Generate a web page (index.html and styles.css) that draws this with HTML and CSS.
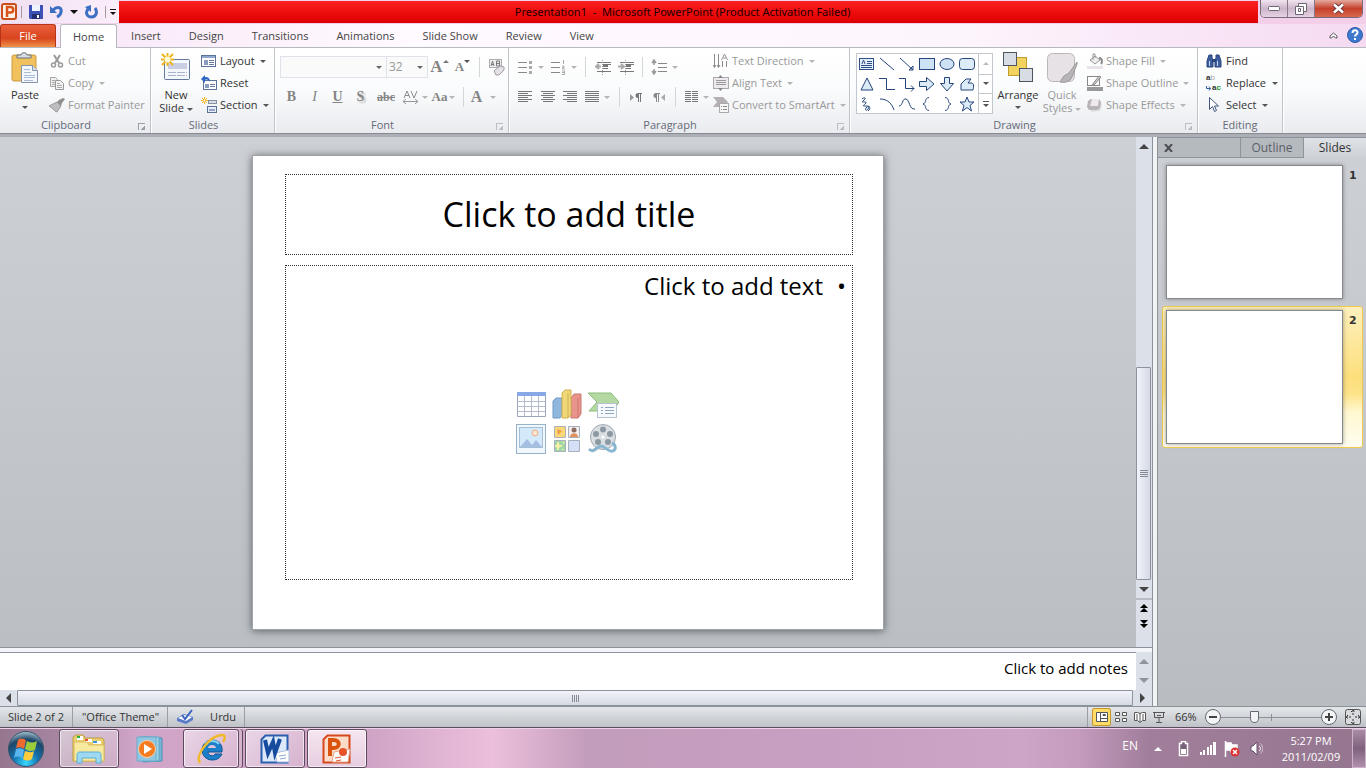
FILE: index.html
```html
<!DOCTYPE html>
<html lang="en">
<head>
    <meta charset="UTF-8">
    <meta name="viewport" content="width=device-width, initial-scale=1.0">
    <title>Presentation1 - Microsoft PowerPoint</title>
    <link rel="stylesheet" href="styles.css">
</head>
<body>
    <!-- title bar -->
    <header class="titlebar">
        <div class="quick-access">
            <svg class="logo" width="16" height="17" viewBox="0 0 16 17"><rect x="1" y="1" width="14" height="15" rx="2" fill="#fff3ea" stroke="#c9501d" stroke-width="2"/><path d="M6 14V4h3.500a2.500 2.500 0 0 1 0 5.500H6" fill="none" stroke="#d9541a" stroke-width="2.500"/></svg>
            <span class="qa-line"></span>
            <button aria-label="Save"><svg width="14" height="14" viewBox="0 0 14 14"><path d="M0 0h14v14H1l-1-1z" fill="#3d50b5"/><path d="M3 0h8v6H3z" fill="#eef3fc"/><path d="M3 9h8v5H3z" fill="#22306f"/><path d="M8 10h2v3H8z" fill="#fff"/></svg></button>
            <button aria-label="Undo" class="undo"><svg width="13" height="14" viewBox="0 0 13 14"><path d="M3 5c4-4 9-3 8 2-.5 3-2 4-4 5" fill="none" stroke="#3b6fc4" stroke-width="3"/><path d="M0 1v7h7z" fill="#3b6fc4"/></svg><span class="caret dark"></span></button>
            <button aria-label="Redo"><svg width="13" height="14" viewBox="0 0 13 14"><path d="M3 4c-3 4-1 8 3.500 8S13 7 10 3" fill="none" stroke="#3b6fc4" stroke-width="3"/><path d="M6 0v7L0 2z" fill="#3b6fc4"/></svg></button>
            <span class="qa-line"></span>
            <button aria-label="Customize toolbar" class="qa-more"><span class="caret dark"></span></button>
        </div>
        <div class="title">Presentation1&nbsp; -&nbsp; Microsoft PowerPoint (Product Activation Failed)</div>
        <div class="win-buttons">
            <button aria-label="Minimize"><svg width="12" height="5" viewBox="0 0 12 5"><rect x=".5" y=".5" width="11" height="4" rx="1" fill="#fff" stroke="#6d6474"/></svg></button>
            <button aria-label="Restore"><svg width="12" height="12" viewBox="0 0 12 12"><g fill="#fff" stroke="#6d6474"><path d="M3.500.5h8v8h-8z"/><path d="M.5 3.500h8v8h-8z"/><path d="M3.500 5.500h2v3h-2z"/></g></svg></button>
            <button aria-label="Close" class="win-close"><svg width="13" height="11" viewBox="0 0 13 11"><path d="M2 1.500l9 8M11 1.500l-9 8" stroke="#6b3a3a" stroke-width="4.500"/><path d="M2 1.500l9 8M11 1.500l-9 8" stroke="#fff" stroke-width="2.500"/></svg></button>
        </div>
    </header>

    <!-- ribbon tabs -->
    <nav class="tabs">
        <button class="file-tab">File</button>
        <button class="tab active">Home</button>
        <button class="tab">Insert</button>
        <button class="tab">Design</button>
        <button class="tab">Transitions</button>
        <button class="tab">Animations</button>
        <button class="tab">Slide Show</button>
        <button class="tab">Review</button>
        <button class="tab">View</button>
        <div class="tabs-right">
            <button aria-label="Minimize ribbon"><svg width="9" height="7" viewBox="0 0 9 7"><path d="M1 6V4l3.500-3L8 4v2H6.500l-2-2-2 2z" fill="#fff" stroke="#555"/></svg></button>
            <button aria-label="Help"><svg width="16" height="16" viewBox="0 0 16 16"><circle cx="8" cy="8" r="7.500" fill="#3f79cf" stroke="#2c5ba8"/><path d="M5.500 6c0-3.500 5-3.500 5-.5 0 2-2.500 2-2.500 4" fill="none" stroke="#fff" stroke-width="2"/><path d="M7 11h2v2H7z" fill="#fff"/></svg></button>
        </div>
    </nav>

    <!-- ribbon -->
    <div class="ribbon">
        <section class="group g-clipboard">
            <div class="group-body">
                <button class="big">
                    <svg width="30" height="32" viewBox="0 0 30 32"><rect x="2" y="3" width="24" height="26" rx="2" fill="#f1c15e" stroke="#c99a3e"/><path d="M7 6V3h4c0-3 6-3 6 0h4v3z" fill="#d9dde3" stroke="#6b7078"/><path d="M11.500 13.500h11l5 5v12h-16z" fill="#f4f8fd" stroke="#8593ab"/><path d="M22.500 13.500v5h5" fill="#d5e0ef" stroke="#8593ab"/><path d="M14 17.500h6M14 20.500h7M14 23.500h11M14 25.500h11M14 28.500h9" stroke="#a9bbd8"/></svg>
                    <span>Paste</span>
                    <span class="caret"></span>
                </button>
                <div class="stack">
                    <button class="small off"><svg width="16" height="16" viewBox="0 0 16 16"><path d="M5 2l5 8M11 2L6 10" stroke="#9a9a9a" stroke-width="2"/><circle cx="4.500" cy="12" r="2" fill="none" stroke="#9a9a9a" stroke-width="1.500"/><circle cx="11.500" cy="12" r="2" fill="none" stroke="#9a9a9a" stroke-width="1.500"/></svg>Cut</button>
                    <button class="small off"><svg width="16" height="16" viewBox="0 0 16 16"><path d="M1.500 2.500h5l2 2v7h-7z" fill="#efefef" stroke="#a5a5a5"/><path d="M6.500 5.500h5l3 3v6h-8z" fill="#f3f3f3" stroke="#9a9a9a"/><path d="M3 5.500h3M3 7.500h3M3 9.500h3M8 8.500h3M8 10.500h5M8 12.500h5" stroke="#aaa"/></svg>Copy<span class="caret"></span></button>
                    <button class="small off"><svg width="16" height="16" viewBox="0 0 16 16"><path d="M0 9l8-4 4 4-4 6-2-1-2-2z" fill="#bdbdbd" stroke="#9c9c9c"/><path d="M8 5l2-2 4-2 2 1-3 4-1 3z" fill="#8f8f8f"/></svg>Format Painter</button>
                </div>
            </div>
            <div class="group-label">Clipboard<span class="launcher"></span></div>
        </section>

        <section class="group g-slides">
            <div class="group-body">
                <button class="big">
                    <svg width="30" height="32" viewBox="0 0 30 32"><rect x="3.500" y="7.500" width="25" height="20" rx="1" fill="#f4f8fc" stroke="#64799b"/><path d="M7 11h19v6H7z" fill="#c9cee2"/><path d="M7 20.500h19M7 23.500h19" stroke="#a9b4c9" stroke-dasharray="8 1"/><path d="M6.500 1v13M0 7.500h13M1 2l11 11M12 2L1 13" stroke="#eeb51c" stroke-width="2"/><circle cx="6.500" cy="7.500" r="3" fill="#fffbd5"/></svg>
                    <span>New</span>
                    <span>Slide <span class="caret"></span></span>
                </button>
                <div class="stack">
                    <button class="small"><svg width="16" height="16" viewBox="0 0 16 16"><rect x=".5" y="2.500" width="14" height="11" fill="#fff" stroke="#5b7299"/><path d="M1 3h13v2H1z" fill="#8fa8cf"/><path d="M3 7h4v5H3z" fill="#8b9dbd"/><path d="M8 7.500h5M8 9.500h5M8 11.500h5" stroke="#65779a"/></svg>Layout<span class="caret"></span></button>
                    <button class="small"><svg width="16" height="16" viewBox="0 0 16 16"><rect x="2.500" y="5.500" width="13" height="9" fill="#fff" stroke="#5b7299"/><path d="M4 9h4v4H4z" fill="#8b9dbd"/><path d="M9 9.500h5M9 11.500h5" stroke="#65779a"/><path d="M0 4l4-4v2c3 0 5 1 5 5-1-2-3-3-5-2v3z" fill="#2f68c4"/></svg>Reset</button>
                    <button class="small"><svg width="16" height="16" viewBox="0 0 16 16"><rect x="7.500" y="3.500" width="8" height="3" fill="#d9dde5" stroke="#8790a2"/><rect x="6.500" y="9.500" width="9" height="6" fill="#e7eef9" stroke="#5b7299"/><path d="M8 12h6v2H8z" fill="#93a5c4"/><path d="M3.500 0v7M0 3.500h7M1 1l5 5M6 1L1 6" stroke="#eeb51c"/><circle cx="3.500" cy="3.500" r="1" fill="#fff"/></svg>Section<span class="caret"></span></button>
                </div>
            </div>
            <div class="group-label">Slides</div>
        </section>

        <section class="group g-font">
            <div class="group-body rows">
                <div class="row">
                    <span class="combo font-name"><select aria-label="Font"><option></option></select></span>
                    <span class="combo font-size"><select aria-label="Font size"><option>32</option></select></span>
                    <button class="ico" aria-label="Grow font"><span class="serif grow">A</span><span class="tri up"></span></button>
                    <button class="ico" aria-label="Shrink font"><span class="serif shrink">A</span><span class="tri down"></span></button>
                    <span class="sep"></span>
                    <button class="ico" aria-label="Clear formatting"><svg width="18" height="18" viewBox="0 0 18 18"><rect x="1.500" y="1.500" width="12" height="8" fill="#eee" stroke="#b3abb3"/><path d="M3 8l1.500-5L6 8M3.500 6.500h2M8.500 3v5h3V3h-3M9 5.500h2" fill="none" stroke="#777"/><path d="M6 13l6-5 4 1v3l-5 5H8z" fill="#e4e0e6" stroke="#a39ba5"/></svg></button>
                </div>
                <div class="row">
                    <button class="ico serif bold">B</button>
                    <button class="ico serif italic">I</button>
                    <button class="ico serif under">U</button>
                    <button class="ico serif shadow">S</button>
                    <button class="ico wide serif strike">abc</button>
                    <button class="ico drop" aria-label="Character spacing"><svg width="18" height="16" viewBox="0 0 18 16"><path d="M2 9l3-7 3 7M3 6.500h4M9 2l3 7 3-7" fill="none" stroke="#8c8c8c"/><path d="M1 12.500h15M4 10l-3 2.500L4 15M13 10l3 2.500-3 2.500" fill="none" stroke="#999"/></svg><span class="caret pale"></span></button>
                    <button class="ico drop serif case">Aa<span class="caret pale"></span></button>
                    <span class="sep"></span>
                    <button class="ico drop serif color">A<span class="caret pale"></span></button>
                </div>
            </div>
            <div class="group-label">Font<span class="launcher pale"></span></div>
        </section>

        <section class="group g-paragraph">
            <div class="group-body">
                <div class="rows para-rows">
                    <div class="row">
                        <button class="ico drop2" aria-label="Bullets"><svg width="15" height="15" viewBox="0 0 15 15"><path d="M0 2.500h9M0 7.500h9M0 12.500h9" stroke="#888"/><path d="M11 1h3v3h-3zM11 6h3v3h-3zM11 11h3v3h-3z" fill="#aaa"/></svg><span class="caret pale"></span></button>
                        <button class="ico drop2" aria-label="Numbering"><svg width="15" height="15" viewBox="0 0 15 15"><path d="M0 2.500h9M0 7.500h9M0 12.500h9" stroke="#888"/><path d="M12.500 0v4M11 6h2v1.500h-1.500V9H14M11 11h2.500v3.500H11M11 12.500h2" fill="none" stroke="#aaa"/></svg><span class="caret pale"></span></button>
                        <span class="sep"></span>
                        <button class="ico" aria-label="Decrease indent"><svg width="16" height="15" viewBox="0 0 16 15"><path d="M2 2.500h14M7 8.500h6M2 11.500h14" stroke="#777"/><path d="M8 4h8v1H8zM8 5h5v2H8z" fill="#777"/><path d="M6 6.500H1M4 4L1 6.500 4 9" fill="none" stroke="#aaa" stroke-width="2"/><path d="M7.500 0v15" stroke="#999" stroke-dasharray="1 1"/></svg></button>
                        <button class="ico" aria-label="Increase indent"><svg width="16" height="15" viewBox="0 0 16 15"><path d="M2 2.500h14M7 8.500h6M2 11.500h14" stroke="#777"/><path d="M8 4h8v1H8zM8 5h5v2H8z" fill="#777"/><path d="M0 6.500h5M3 4l3 2.500L3 9" fill="none" stroke="#aaa" stroke-width="2"/><path d="M7.500 0v15" stroke="#999" stroke-dasharray="1 1"/></svg></button>
                        <span class="sep"></span>
                        <button class="ico drop2" aria-label="Line spacing"><svg width="16" height="16" viewBox="0 0 16 16"><path d="M7 4.500h9M7 8.500h9M7 12.500h9" stroke="#888"/><path d="M3 1v5M3 10v5M1 4l2-3 2 3M1 12l2 3 2-3" fill="none" stroke="#999" stroke-width="1.500"/></svg><span class="caret pale"></span></button>
                    </div>
                    <div class="row">
                        <button class="ico" aria-label="Align left"><svg width="14" height="12" viewBox="0 0 14 12"><path d="M0 .5h14M0 2.500h10M0 4.500h14M0 6.500h10M0 8.500h14M0 10.500h10" stroke="#777"/></svg></button>
                        <button class="ico" aria-label="Center"><svg width="14" height="12" viewBox="0 0 14 12"><path d="M0 .5h14M2 2.500h10M0 4.500h14M2 6.500h10M0 8.500h14M2 10.500h10" stroke="#777"/></svg></button>
                        <button class="ico" aria-label="Align right"><svg width="14" height="12" viewBox="0 0 14 12"><path d="M0 .5h14M4 2.500h10M0 4.500h14M4 6.500h10M0 8.500h14M4 10.500h10" stroke="#777"/></svg></button>
                        <button class="ico drop2" aria-label="Justify"><svg width="14" height="12" viewBox="0 0 14 12"><path d="M0 .5h14M0 2.500h14M0 4.500h14M0 6.500h14M0 8.500h14M0 10.500h14" stroke="#777"/></svg><span class="caret pale"></span></button>
                        <span class="sep"></span>
                        <button class="ico" aria-label="Left to right"><svg width="12" height="9" viewBox="0 0 12 9"><path d="M0 1l4 3.500L0 8z" fill="#999"/><path d="M12 0H8a2 2 0 0 0 0 5v4h1V1h1v8h1V1h1z" fill="#777"/></svg></button>
                        <button class="ico" aria-label="Right to left"><svg width="12" height="9" viewBox="0 0 12 9"><path d="M12 1L8 4.500 12 8z" fill="#aaa"/><path d="M7 0H3a2 2 0 0 0 0 5v4h1V1h1v8h1V1h1z" fill="#888"/></svg></button>
                        <span class="sep"></span>
                        <button class="ico drop2" aria-label="Columns"><svg width="13" height="12" viewBox="0 0 13 12"><path d="M0 .5h6M0 2.500h6M0 4.500h6M0 6.500h6M0 8.500h6M0 10.500h6M7 .5h6M7 2.500h6M7 4.500h6M7 6.500h6M7 8.500h6M7 10.500h6" stroke="#777"/></svg><span class="caret pale"></span></button>
                    </div>
                </div>
                <div class="stack">
                    <button class="small off"><svg width="16" height="16" viewBox="0 0 16 16"><path d="M1.500 1v13M5.500 1v13M9.500 8v6M13.500 8v6M0 12l1.500 2.500L3 12M4 12l1.500 2.500L7 12" fill="none" stroke="#8a8a8a"/><path d="M8.500 7l3-6 3 6M10 5h3" fill="none" stroke="#999"/></svg>Text Direction<span class="caret"></span></button>
                    <button class="small off"><svg width="16" height="16" viewBox="0 0 16 16"><rect x=".5" y="2.500" width="15" height="11" fill="#eee9ee" stroke="#aaa"/><path d="M3 5.500h10M3 7.500h10M3 9.500h10" stroke="#999"/><path d="M5 3l2.500-3L10 3zM5 13l2.500 3 2.500-3z" fill="#888"/></svg>Align Text<span class="caret"></span></button>
                    <button class="small off"><svg width="16" height="16" viewBox="0 0 16 16"><path d="M0 0h10l5 5-3 5H0l4-5z" fill="#b5b0b5"/><rect x="6.500" y="6.500" width="9" height="9" fill="#f6f6f6" stroke="#aaa"/><path d="M8 9.500h1M10 9.500h4M8 12.500h1M10 12.500h4" stroke="#888"/></svg>Convert to SmartArt<span class="caret"></span></button>
                </div>
            </div>
            <div class="group-label">Paragraph<span class="launcher pale"></span></div>
        </section>

        <section class="group g-drawing">
            <div class="group-body">
                <div class="gallery">
                    <div class="shapes">
                        <button aria-label="Text box"><svg viewBox="0 0 16 16"><rect x=".5" y="2.500" width="14" height="11" fill="#e4effa" stroke="#2c4f86"/><path d="M3 8l1.500-4L6 8M8 5.500h5M8 7.500h5M2 9.500h11M2 11.500h11" fill="none" stroke="#2c4f86"/></svg></button>
                        <button aria-label="Line"><svg viewBox="0 0 16 16"><path d="M1 2l14 12"/></svg></button>
                        <button aria-label="Arrow"><svg viewBox="0 0 16 16"><path d="M1 2l13 12M14 10v4h-4z"/></svg></button>
                        <button aria-label="Rectangle"><svg viewBox="0 0 16 16"><rect x=".5" y="2.500" width="15" height="11" fill="#cde2f5"/></svg></button>
                        <button aria-label="Oval"><svg viewBox="0 0 16 16"><ellipse cx="8" cy="8" rx="7" ry="5.500" fill="#cde2f5"/></svg></button>
                        <button aria-label="Rounded rectangle"><svg viewBox="0 0 16 16"><rect x=".5" y="2.500" width="15" height="11" rx="3" fill="#dcebf8"/></svg></button>
                        <button aria-label="Triangle"><svg viewBox="0 0 16 16"><path d="M8 2l6 12H2z" fill="#dcebf8"/></svg></button>
                        <button aria-label="Elbow"><svg viewBox="0 0 16 16"><path d="M0 2.500h7.500v11H16"/></svg></button>
                        <button aria-label="Elbow arrow"><svg viewBox="0 0 16 16"><path d="M0 2.500h6.500v10H15M12 9.500l3 3-3 3"/></svg></button>
                        <button aria-label="Right arrow"><svg viewBox="0 0 16 16"><path d="M.5 5.500h7V1.500L15 8l-7.500 6.500v-4h-7z" fill="#dcebf8"/></svg></button>
                        <button aria-label="Down arrow"><svg viewBox="0 0 16 16"><path d="M5.500 1.500h5v6h4L8 15 1.500 7.500h4z" fill="#dcebf8"/></svg></button>
                        <button aria-label="Freeform"><svg viewBox="0 0 16 16"><path d="M2 14V8l5-5h5l-3 4h3c3 0 3 3 2 7z" fill="#dcebf8"/></svg></button>
                        <button aria-label="Scribble"><svg viewBox="0 0 16 16"><path d="M3 3c4-3 4 0 1 2s4 0 3 2-5 3-1 3 5 0 3 3-4 0-1-2 4 2 1 4"/></svg></button>
                        <button aria-label="Arc"><svg viewBox="0 0 16 16"><path d="M1 3c8 0 12 5 14 11"/></svg></button>
                        <button aria-label="Curve"><svg viewBox="0 0 16 16"><path d="M0 10C4 10 3 2 7 3s3 11 9 10"/></svg></button>
                        <button aria-label="Left brace"><svg viewBox="0 0 16 16"><path d="M10 1.500C5 2 8 7 4 8c4 1 1 6 6 6.500"/></svg></button>
                        <button aria-label="Right brace"><svg viewBox="0 0 16 16"><path d="M6 1.500c5 .5 2 5.500 6 6.500-4 1-1 6-6 6.500"/></svg></button>
                        <button aria-label="Star"><svg viewBox="0 0 16 16"><path d="M8 1l2 5h5l-4 3.500L12.500 15 8 11.500 3.500 15 5 9.500 1 6h5z" fill="#dcebf8"/></svg></button>
                    </div>
                    <div class="gallery-scroll">
                        <button aria-label="Up"><span class="tri up pale"></span></button>
                        <button aria-label="Down"><span class="caret"></span></button>
                        <button aria-label="More" class="more"><span class="caret"></span></button>
                    </div>
                </div>
                <button class="big">
                    <svg width="32" height="32" viewBox="0 0 32 32"><rect x="6.500" y="5.500" width="18" height="18" fill="#f3d35f" stroke="#c29c2c"/><rect x="1.500" y=".5" width="13" height="13" fill="#d8dde3" stroke="#4d5561"/><rect x="17.500" y="16.500" width="13" height="13" fill="#d8dde3" stroke="#4d5561"/></svg>
                    <span>Arrange</span>
                    <span class="caret"></span>
                </button>
                <button class="big off">
                    <svg width="32" height="32" viewBox="0 0 32 32"><rect x="1.500" y="1.500" width="27" height="28" rx="5" fill="#e6e2e6" stroke="#bbb6bb"/><path d="M31 10l-8 11-5 3-4 6c5 1 10 0 12-5l5-13z" fill="#b8b4b8" stroke="#999"/></svg>
                    <span>Quick</span>
                    <span>Styles <span class="caret"></span></span>
                </button>
                <div class="stack">
                    <button class="small off"><svg width="16" height="16" viewBox="0 0 16 16"><path d="M3 7l5-4 5 4-5 4z" fill="#eee" stroke="#999"/><path d="M6 7V1h2v4" fill="none" stroke="#999"/><path d="M12 5c4 0 3 5 2 6" fill="none" stroke="#888" stroke-width="2"/><path d="M0 13h16v3H0z" fill="#e8e3e8"/></svg>Shape Fill<span class="caret"></span></button>
                    <button class="small off"><svg width="16" height="16" viewBox="0 0 16 16"><rect x=".5" y="1.500" width="12" height="9" fill="#fff" stroke="#888"/><path d="M5 10l7-9 2 1-7 8z" fill="#ccc" stroke="#888"/><path d="M0 12h16v4H0z" fill="#999"/></svg>Shape Outline<span class="caret"></span></button>
                    <button class="small off"><svg width="16" height="16" viewBox="0 0 16 16"><path d="M5 5l10 2-2 7-9 1z" fill="#ddd"/><path d="M4 2h8l2 3-1 6-3 2H2l-2-3 1-6z" fill="#b7b3b7"/><path d="M5 2h7l-1 7H3z" fill="#eee9ee"/></svg>Shape Effects<span class="caret"></span></button>
                </div>
            </div>
            <div class="group-label">Drawing<span class="launcher pale"></span></div>
        </section>

        <section class="group g-editing">
            <div class="group-body">
                <div class="stack">
                    <button class="small"><svg width="16" height="16" viewBox="0 0 16 16"><path d="M3 2h3v3l1 2v7H1V8zM10 2h3l2 6v6H9V7l1-2z" fill="#3c5e9e" stroke="#28457d"/><path d="M6 6h4v3H6z" fill="#28457d"/><path d="M3.500 8v5M11.500 8v5" stroke="#c8d8f0"/></svg>Find</button>
                    <button class="small"><span class="replace-icon"><span><b>a</b>b</span><span class="second"><svg width="5" height="5" viewBox="0 0 5 5"><path d="M.5 0v2.500h4M3 .5l1.500 2L3 4.500" fill="none" stroke="#2c5aa8"/></svg><b>a<em>c</em></b></span></span>Replace<span class="caret"></span></button>
                    <button class="small"><svg width="16" height="16" viewBox="0 0 16 16"><path d="M3.500.5v12l3-3 2 5 2-1-2-4.500h4z" fill="#fff" stroke="#3f5580"/></svg>Select<span class="caret"></span></button>
                </div>
            </div>
            <div class="group-label">Editing</div>
        </section>
    </div>

    <!-- work area -->
    <main class="workspace">
        <div class="editor">
            <div class="canvas-row">
                <div class="canvas">
                    <div class="slide">
                        <div class="placeholder title-box">Click to add title</div>
                        <div class="placeholder text-box">
                            <p>Click to add text<span>•</span></p>
                            <div class="inserts">
                                <button aria-label="Insert table"><svg viewBox="0 0 32 32"><path d="M2.500 4.500h28v24h-28z" fill="#fff" stroke="#98a5ba"/><path d="M2 4h29v4H2z" fill="#89a9e6"/><path d="M2 13.500h29M2 18.500h29M2 23.500h29M9.500 8v20M16.500 8v20M23.500 8v20" stroke="#b4bccb"/></svg></button>
                                <button aria-label="Insert chart"><svg viewBox="0 0 32 32"><path d="M2 13l3-3h6v17l-2 3H2z" fill="#8fb7dd" stroke="#6f9bc7"/><path d="M20 10l3-4h7v20l-3 4h-7z" fill="#e8948c" stroke="#cc7770"/><path d="M11 5l3-3h6v25l-3 3h-6z" fill="#f0d77a" stroke="#cfb04e"/><path d="M17 5v24" stroke="#cfb04e"/><path d="M27 10v19" stroke="#cc7770"/></svg></button>
                                <button aria-label="Insert SmartArt"><svg viewBox="0 0 32 32"><path d="M1 5h23l8 9-6 9H2l8-9z" fill="#b3d8a2" stroke="#8dbd7a"/><rect x="10.500" y="15.500" width="19" height="14" fill="#f7fafc" stroke="#b6c2cf"/><path d="M14 19.500h2M18 19.500h9M14 22.500h2M18 22.500h9M14 25.500h2M18 25.500h9" stroke="#8fa6bd"/></svg></button>
                                <button aria-label="Insert picture"><svg viewBox="0 0 32 32"><rect x="1.500" y="1.500" width="29" height="29" fill="#f1f8fd" stroke="#96b3cb"/><rect x="4.500" y="4.500" width="23" height="20" fill="#d4eafa" stroke="#a3bfd6"/><circle cx="20" cy="10" r="3" fill="#fde5cf" stroke="#f0ac8a"/><path d="M5 24l7-8 5 6 4-5 6 7z" fill="#a5bee2"/></svg></button>
                                <button aria-label="Insert clip art"><svg viewBox="0 0 32 32"><path d="M3.500 3.500h11v11h-11z" fill="#fbd875" stroke="#a8b0bd"/><path d="M17.500 3.500h11v11h-11z" fill="#f2eeee" stroke="#a8b0bd"/><path d="M3.500 17.500h11v11h-11z" fill="#9fd5a7" stroke="#a8b0bd"/><path d="M17.500 17.500h11v11h-11z" fill="#d5e0f8" stroke="#a8b0bd"/><path d="M6 6l5 2-4 4z" fill="#ed9d4e"/><circle cx="23" cy="7" r="2.500" fill="#8c6d64"/><path d="M19 14c0-5 8-5 8 0z" fill="#e2925e"/><path d="M7 19l1 3 3 1-3 1-1 3-1-3-2-1 2-1zM12 18l1 3M11 26l2 1" fill="#f7f3a5" stroke="#f7f3a5"/></svg></button>
                                <button aria-label="Insert media"><svg viewBox="0 0 32 32"><circle cx="16" cy="14" r="12.500" fill="#d9dee3" stroke="#9fa8b1"/><g fill="#8c98a2"><circle cx="16" cy="6.500" r="3"/><circle cx="9" cy="11" r="3"/><circle cx="23" cy="11" r="3"/><circle cx="11" cy="19" r="3"/><circle cx="21" cy="19" r="3"/></g><circle cx="16" cy="14" r="1.500" fill="#fff"/><path d="M2 26c5 5 8-3 12-3s8 7 12 5 2-7-1-8" fill="none" stroke="#88b5d0" stroke-width="3"/></svg></button>
                            </div>
                        </div>
                    </div>
                </div>
                <div class="vscroll">
                    <button aria-label="Scroll up"><span class="tri up"></span></button>
                    <div class="track"><div class="thumb"></div></div>
                    <button aria-label="Scroll down"><span class="tri down"></span></button>
                    <div class="page-buttons">
                        <button aria-label="Previous slide"><span class="tri up"></span><span class="tri up"></span></button>
                        <button aria-label="Next slide"><span class="tri down"></span><span class="tri down"></span></button>
                    </div>
                </div>
            </div>
            <div class="notes">
                <div class="notes-text">Click to add notes</div>
                <div class="notes-scroll">
                    <button aria-label="Notes up"><span class="tri up"></span></button>
                    <button aria-label="Notes down"><span class="tri down"></span></button>
                </div>
            </div>
            <div class="hscroll">
                <button aria-label="Scroll left"><span class="tri left"></span></button>
                <div class="thumb"></div>
                <button aria-label="Scroll right"><span class="tri right"></span></button>
            </div>
        </div>

        <aside class="pane">
            <div class="pane-tabs">
                <div class="pane-close"><button aria-label="Close pane"><svg width="9" height="8" viewBox="0 0 9 8"><path d="M1 0l7 8M8 0L1 8" stroke="#4b4f54" stroke-width="2"/></svg></button></div>
                <button class="pane-tab">Outline</button>
                <button class="pane-tab active">Slides</button>
            </div>
            <ol class="thumbs">
                <li><div class="mini"></div><span>1</span></li>
                <li class="selected"><div class="mini"></div><span>2</span></li>
            </ol>
        </aside>
    </main>

    <!-- status bar -->
    <footer class="status">
        <span class="cell">Slide 2 of 2</span>
        <span class="cell">"Office Theme"</span>
        <span class="cell lang"><svg width="17" height="16" viewBox="0 0 17 16"><path d="M0 9l7-4 9 3v3l-7 4-9-3z" fill="#5a7cc8"/><path d="M1 9l6-3 8 2-6 4z" fill="#fff"/><path d="M5 6l3 4 7-9" fill="none" stroke="#3a63c0" stroke-width="2"/></svg>Urdu</span>
        <div class="views">
            <button class="current" aria-label="Normal view"><svg width="12" height="10" viewBox="0 0 12 10"><path d="M.5.5h11v9H.5zM4.500.5v9M7 3.500h2.500v-1H7zM5 6.500h7" fill="#fff" stroke="#555"/></svg></button>
            <button aria-label="Slide sorter"><svg width="12" height="10" viewBox="0 0 12 10"><path d="M.5.5h4v3h-4zM7.500.5h4v3h-4zM.5 6.500h4v3h-4zM7.500 6.500h4v3h-4z" fill="#fff" stroke="#555"/></svg></button>
            <button aria-label="Reading view"><svg width="12" height="11" viewBox="0 0 12 11"><path d="M.5.5l3 0L6 1.500 8.500.5h3v8h-3L6 10.500l-2.500-2h-3zM6 1v9M2 3h2M2 5h2M2 7h2M8 3h2M8 5h2M8 7h2" fill="#fff" stroke="#555"/></svg></button>
            <button aria-label="Slide show"><svg width="12" height="11" viewBox="0 0 12 11"><path d="M0 .5h12M1.500 1v4.500h9V1M6 6v4M3 10.500h6M4 3.500h4" fill="none" stroke="#555"/></svg></button>
        </div>
        <span class="percent">66%</span>
        <button class="round" aria-label="Zoom out"><svg width="8" height="8" viewBox="0 0 8 8"><path d="M0 4h8" stroke="#444" stroke-width="2"/></svg></button>
        <input type="range" class="zoom" aria-label="Zoom" min="0" max="100" value="32">
        <button class="round" aria-label="Zoom in"><svg width="8" height="8" viewBox="0 0 8 8"><path d="M0 4h8M4 0v8" stroke="#444" stroke-width="2"/></svg></button>
        <button class="fit" aria-label="Fit slide"><svg width="16" height="16" viewBox="0 0 16 16"><rect x=".5" y=".5" width="15" height="15" rx="2" fill="#d8dadd" stroke="#555"/><path d="M8 1v5M6 3l2-2 2 2M8 15v-5M6 13l2 2 2-2M1 8h5M3 6L1 8l2 2M15 8h-5M13 6l2 2-2 2" fill="none" stroke="#333" stroke-dasharray="2 1"/></svg></button>
    </footer>

    <!-- taskbar -->
    <div class="taskbar">
        <button class="start" aria-label="Start"><svg width="38" height="38" viewBox="0 0 38 38"><defs><radialGradient id="orb" cx=".5" cy=".9" r=".9"><stop offset="0" stop-color="#38d8ff"/><stop offset=".4" stop-color="#1573b0"/><stop offset=".75" stop-color="#1d4668"/><stop offset="1" stop-color="#a9c1d0"/></radialGradient></defs><circle cx="19" cy="19" r="17.500" fill="url(#orb)" stroke="#35566c"/><path d="M11 10c3-2 5-1 8 0l-2 9c-3-2-5-2-8-1z" fill="#ef6a2f"/><path d="M20 11c3 2 6 2 10 0l-2 9c-4 2-7 1-10-1z" fill="#9ccc3c"/><path d="M9 19c3-1 5-1 8 1l-2 8c-3-2-5-2-8 0z" fill="#5ab4ee"/><path d="M18 21c3 1 6 2 9 0l-2 8c-3 2-6 2-9 0z" fill="#fccc3a"/></svg></button>
        <button class="task open explorer" aria-label="Explorer"><svg width="34" height="30" viewBox="0 0 34 30"><path d="M1 27V3l3-2h7l2 3h17l2 2v21z" fill="#e8cf70" stroke="#bb9d3e"/><path d="M5 2h6v4H5z" fill="#fff"/><path d="M5 2h3v2H5z" fill="#27ae3d"/><path d="M13 5h7v3h-7z" fill="#fff"/><path d="M13 5h3v2h-3z" fill="#e74c3c"/><path d="M21 7h8v3h-8z" fill="#fff"/><path d="M21 7h4v2h-4z" fill="#3498db"/><path d="M2 8h13l2 3h15v16H2z" fill="#f8e9a0" stroke="#d9bd5c"/><path d="M5 29V21c0-2 1-3 3-3h18c2 0 3 1 3 3v8h-5v-5H10v5z" fill="#9fd8f1" stroke="#5aaed6"/></svg></button>
        <button class="task media" aria-label="Media player"><svg width="30" height="28" viewBox="0 0 30 28"><path d="M7 2l19 1v23l-19 1z" fill="#78b6d4" stroke="#4a90b4"/><path d="M4 2l19 0v24H4z" fill="#a1d3e8" stroke="#5ca4c4"/><path d="M1 2h19v24H1z" fill="#8fc7e2" stroke="#6caccb"/><circle cx="11" cy="14" r="8.500" fill="#f47b20" stroke="#fbd0a8"/><path d="M8 9l8 5-8 5z" fill="#fff"/></svg></button>
        <button class="task open ie" aria-label="Internet Explorer"><svg width="32" height="32" viewBox="0 0 32 32"><path d="M27 21c-2 4-5 6-10 6-6 0-10-5-10-10S11 7 17 7c7 0 11 5 10 12H13c0 4 6 5 7 2z" fill="#1b7fc9" stroke="#0f5293"/><path d="M13 15c0-4 8-4 8 0z" fill="#dfc3da"/><path d="M10 11c4-4 11-4 14 0" fill="none" stroke="#7fd6f7" stroke-width="2"/><path d="M5 30C-1 22 16 2 27 2c4 0 3 4 1 7" fill="none" stroke="#f0b92d" stroke-width="2.500"/></svg></button>
        <button class="task open" aria-label="Word"><svg width="30" height="30" viewBox="0 0 30 30"><path d="M1.500 5.500l4-4h22v27h-26z" fill="#dbe9fa" stroke="#2a5fae" stroke-width="2"/><path d="M15 19l14-3v12H17z" fill="#fff" stroke="#a9bfdd"/><path d="M5 6l3 13 5-11 2 11 5-14" fill="none" stroke="#164a9f" stroke-width="4"/><path d="M19 22l7-1M20 25l6-1" stroke="#8eaad3"/></svg></button>
        <button class="task open focus" aria-label="PowerPoint"><svg width="30" height="30" viewBox="0 0 30 30"><path d="M1.500 5.500l4-4h22v27h-26z" fill="#fbdcc8" stroke="#d5481c" stroke-width="2"/><path d="M12 18l16-3-2 13H10z" fill="#fff" stroke="#e3a78c"/><path d="M8 22V6h3.500c7 0 7 8 0 8H8" fill="none" stroke="#da5410" stroke-width="4"/><circle cx="21" cy="18" r="4" fill="#e4562a"/><path d="M13 24l6-1M14 27l5-1" stroke="#e4562a"/></svg></button>
        <div class="tray">
            <span class="input-lang">EN</span>
            <span class="tri up"></span>
            <svg width="11" height="16" viewBox="0 0 11 16"><path d="M3.500 2.500v-2h4v2h2v12h-8v-12z" fill="#77607a" stroke="#fff" stroke-width="1.500"/><path d="M3 8h5v5H3z" fill="#fff"/></svg>
            <svg class="signal" width="16" height="13" viewBox="0 0 16 13"><path d="M0 10h2v3H0zM3 8h2v5H3zM7 5h2v8H7zM10 3h2v10h-2zM13 0h3v13h-3z" fill="#fff"/></svg>
            <svg class="flag" width="17" height="16" viewBox="0 0 17 16"><path d="M1.500 0v16M2 2h5l1 2h5v7H7l-1-2H2z" fill="#fff" stroke="#fff" stroke-width="1.500"/><circle cx="11" cy="11" r="4.500" fill="#dc3232"/><path d="M9 9l4 4M13 9l-4 4" stroke="#fff" stroke-width="1.500"/></svg>
            <svg class="speaker" width="13" height="15" viewBox="0 0 13 15"><path d="M1 5h2l4-4v13l-4-4H1z" fill="#fff" stroke="#65506b"/><path d="M9 5c2 1 2 4 0 5" fill="none" stroke="#fff"/><path d="M10.500 2.500c3 3 3 7 0 10" fill="none" stroke="#d8c4d6"/></svg>
            <time>5:27 PM<br>2011/02/09</time>
            <button class="show-desktop" aria-label="Show desktop"></button>
        </div>
    </div>
</body>
</html>
```
FILE: styles.css
```css
* {
    box-sizing: border-box;
}

body {
    margin: 0;
    min-height: 100vh;
    display: flex;
    flex-direction: column;
    font-family: "Open Sans", "Noto Sans", sans-serif;
    font-size: 11px;
    line-height: 14px;
    color: #333;
    overflow: hidden;
}

button {
    font: inherit;
    color: inherit;
    background: none;
    border: none;
    padding: 0;
    display: flex;
    align-items: center;
    justify-content: center;
    white-space: nowrap;
}

svg {
    display: block;
    flex: none;
}

/* small arrows */
.caret, .tri.down {
    display: inline-block;
    flex: none;
    border: 3px solid transparent;
    border-top-color: #555;
    border-bottom: none;
}

.caret.dark {
    border-width: 4px;
    border-top-color: #111;
    border-bottom: none;
}

.caret.pale, .off .caret {
    border-top-color: #b5b5b5;
}

.tri {
    display: block;
    flex: none;
}

.tri.up {
    border: 3px solid transparent;
    border-bottom-color: #777;
    border-top: none;
}

.tri.up.pale {
    border-bottom-color: #bbb;
}

.tri.left {
    border: 5px solid transparent;
    border-right-color: #444;
    border-left: none;
}

.tri.right {
    border: 5px solid transparent;
    border-left-color: #444;
    border-right: none;
}

/* title bar */
.titlebar {
    height: 24px;
    display: flex;
    align-items: flex-start;
    background: linear-gradient(90deg, #eed3ec, #f3cfea 40%, #f3cfea);
}

.quick-access {
    width: 119px;
    height: 23px;
    padding-left: 1px;
    display: flex;
    align-items: center;
    gap: 7px;
    background: linear-gradient(90deg, #efdff0, #fbeefa);
}

.logo {
    margin-right: -3px;
}

.qa-line {
    width: 1px;
    height: 12px;
    background: #a49ba6;
}

.undo {
    gap: 7px;
}

.quick-access .qa-line + .qa-more {
    margin-left: -3px;
    border-top: 1px solid #111;
    padding-top: 2px;
}

.qa-more .caret.dark {
    border-width: 3px;
    border-bottom: none;
}

.title {
    flex: 1;
    height: 22px;
    margin-top: 1px;
    padding-right: 12px;
    line-height: 22px;
    text-align: center;
    font-family: "Noto Sans", sans-serif;
    color: #1c0000;
    background: linear-gradient(#fb2222, #ee0d0d 50%, #dd0000);
    white-space: nowrap;
}

.win-buttons {
    display: flex;
    margin: 0 3px 0 2px;
    height: 18px;
    border: 1px solid #776a7b;
    border-top: none;
    border-radius: 0 0 5px 5px;
    overflow: hidden;
}

.win-buttons button {
    width: 27px;
    border-right: 1px solid #87788a;
    background: linear-gradient(#f2e4f0, #cbb6c9 50%, #e7d2e4);
}

.win-buttons .win-close {
    width: 47px;
    border: none;
    background: linear-gradient(#e5a99d, #c6402c 50%, #d8684c);
}

/* tabs */
.tabs {
    height: 24px;
    display: flex;
    align-items: flex-end;
    background: linear-gradient(90deg, #f7e3f5, #fffaff 30%, #fdf5fc 70%, #f5daf1);
    border-bottom: 1px solid #b6bac0;
}

.file-tab {
    width: 56px;
    height: 23px;
    margin-right: 4px;
    color: #fff;
    border: 1px solid #b5341a;
    border-bottom: none;
    border-radius: 3px 3px 0 0;
    background: linear-gradient(#e8623d, #d9441f 60%, #f09348);
}

.tab {
    height: 23px;
    padding: 0 14px;
    color: #444;
}

.tab.active {
    padding: 0 12px;
    height: 24px;
    margin-bottom: -1px;
    border: 1px solid #b6bac0;
    border-bottom: none;
    border-radius: 3px 3px 0 0;
    background: #fff;
}

.tabs-right {
    margin-left: auto;
    height: 24px;
    padding-right: 3px;
    display: flex;
    gap: 9px;
}

/* ribbon */
.ribbon {
    height: 86px;
    display: flex;
    border-bottom: 1px solid #868b92;
    background: linear-gradient(#fff, #fafbfc 50%, #e9ebef);
}

.group {
    flex: none;
    display: flex;
    flex-direction: column;
    border-right: 1px solid #bfc3ca;
    box-shadow: 1px 0 #fff;
}

.g-clipboard { width: 151px; }
.g-slides { width: 124px; }
.g-font { width: 234px; }
.g-paragraph { width: 341px; }
.g-drawing { width: 348px; }
.g-editing { width: 85px; }

.group-body {
    height: 70px;
    padding: 2px 0 0 5px;
    display: flex;
}

.group-label {
    position: relative;
    height: 15px;
    padding-right: 18px;
    text-align: center;
    color: #666b78;
}

.g-editing .group-label {
    padding: 0;
}

.launcher {
    position: absolute;
    right: 5px;
    bottom: 3px;
    width: 7px;
    height: 7px;
    border: 1px solid #9a9ea6;
    border-right: none;
    border-bottom: none;
    background: linear-gradient(135deg, transparent 60%, #9a9ea6 60%);
}

.launcher.pale {
    opacity: .6;
}

.big {
    flex-direction: column;
    justify-content: flex-start;
    width: 40px;
    padding-top: 2px;
    line-height: 13px;
}

.big svg {
    margin-bottom: 4px;
}

.big > .caret {
    margin-top: 5px;
}

.g-slides .big {
    margin-right: 5px;
}

.big .caret, .gallery-scroll .caret {
    vertical-align: middle;
}

.off {
    color: #999;
}

.stack {
    display: flex;
    flex-direction: column;
    align-items: flex-start;
}

.g-clipboard .stack {
    margin-left: 4px;
}

.small {
    height: 22px;
    gap: 3px;
}

.small .caret {
    margin-left: 2px;
}

.g-editing .small {
    gap: 4px;
}

.g-editing .group-body {
    padding-left: 8px;
}

.replace-icon {
    width: 16px;
    display: grid;
    grid-template-rows: 10px 10px;
    font-family: "Liberation Sans", sans-serif;
    font-size: 8px;
    line-height: 10px;
    text-align: left;
    color: #aaa;
}

.replace-icon b {
    color: #333;
}

.replace-icon em {
    font-style: normal;
    color: #159a24;
}

.second {
    display: flex;
    align-items: center;
    gap: 1px;
}

/* font and paragraph groups */
.rows {
    flex-direction: column;
    gap: 8px;
    padding-top: 8px;
}

.para-rows {
    display: flex;
    width: 199px;
    padding-top: 6px;
}

.row {
    display: flex;
    align-items: center;
    height: 22px;
}

.combo {
    position: relative;
    height: 22px;
    border: 1px solid #dfe2e8;
    background: #fafafa;
}

.combo::after {
    content: "";
    position: absolute;
    right: 4px;
    top: 9px;
    border: 3px solid transparent;
    border-top-color: #666;
    border-bottom: none;
}

.combo select {
    width: 100%;
    height: 20px;
    padding: 0 2px;
    appearance: none;
    border: none;
    background: none;
    font: inherit;
    font-size: 12px;
    color: #999;
}

.font-name { width: 107px; }
.font-size { width: 41px; border-left: none; }

.ico {
    width: 23px;
    height: 22px;
    color: #858585;
}

.ico.wide {
    width: 28px;
}

.ico.drop {
    width: 29px;
    gap: 2px;
}

.ico.drop2 {
    width: 33px;
    gap: 5px;
}

.serif {
    font-family: "Liberation Serif", serif;
    font-size: 14px;
    font-weight: bold;
}

.grow { font-size: 17px; }
.shrink { font-size: 13px; }

.ico .tri {
    align-self: flex-start;
    margin-top: 4px;
}

.italic { font-style: italic; font-weight: normal; }
.under { text-decoration: underline; }
.shadow { text-shadow: 2px 2px 2px #bbb; }
.strike { font-size: 12px; text-decoration: line-through; }
.case { font-size: 13px; }
.color { font-size: 16px; }

.color .caret {
    margin-left: 6px;
}

.sep {
    width: 1px;
    height: 20px;
    margin: 0 5px;
    background: #d3d6db;
}

/* drawing */
.gallery {
    width: 137px;
    height: 61px;
    margin: 3px 4px 0 1px;
    display: flex;
    border: 1px solid #c3c7ce;
    background: #fff;
}

.shapes {
    flex: 1;
    display: grid;
    grid-template-columns: repeat(6, 20px);
    grid-template-rows: repeat(3, 20px);
}

.shapes svg {
    width: 16px;
    height: 16px;
    fill: none;
    stroke: #26457a;
}

.gallery-scroll {
    width: 14px;
    display: grid;
    grid-template-rows: repeat(3, 1fr);
    border-left: 1px solid #c3c7ce;
}

.gallery-scroll button + button {
    border-top: 1px solid #c3c7ce;
}

.more {
    flex-direction: column;
    gap: 2px;
}

.more::before {
    content: "";
    width: 6px;
    height: 1px;
    background: #555;
}

.g-drawing .big {
    width: 42px;
}

.g-drawing .big.off {
    margin: 0 4px 0 2px;
}

/* workspace */
.workspace {
    flex: 1;
    display: flex;
    border-top: 3px solid #acb0b6;
    background: linear-gradient(#cdd0d5, #b9bdc2);
}

.editor {
    flex: 1;
    display: flex;
    flex-direction: column;
    border-right: 1px solid #8d939c;
}

.canvas-row {
    flex: 1;
    display: flex;
    border-bottom: 1px solid #8d939c;
}

.canvas {
    flex: 1;
    padding-top: 18px;
}

.slide {
    width: 632px;
    height: 475px;
    margin: 0 auto;
    padding: 18px 30px 49px 32px;
    display: flex;
    flex-direction: column;
    gap: 10px;
    background: #fff;
    border: 1px solid #a0a4a9;
    box-shadow: 0 1px 8px rgba(50, 55, 60, .7);
    color: #000;
}

.placeholder {
    border: 1px dotted #333;
}

.title-box {
    height: 81px;
    line-height: 78px;
    text-align: center;
    font-size: 34px;
}

.text-box {
    flex: 1;
}

.text-box p {
    margin: 0;
    padding: 3px 6px 0 0;
    text-align: right;
    font-size: 24px;
    line-height: 34px;
}

.text-box p span {
    margin-left: 14px;
}

.inserts {
    width: 112px;
    margin: 83px auto 0;
    display: grid;
    grid-template-columns: repeat(3, 36px);
    grid-auto-rows: 35px;
}

.inserts svg {
    width: 32px;
    height: 32px;
}

/* scroll bars */
.vscroll {
    width: 16px;
    display: flex;
    flex-direction: column;
    background: #dce0e8;
}

.vscroll > button {
    height: 18px;
}

.vscroll .tri.up, .notes-scroll .tri.up {
    border-width: 5px;
    border-top: none;
    border-bottom-color: #444;
}

.vscroll .tri.down, .notes-scroll .tri.down {
    border-width: 5px;
    border-bottom: none;
    border-top-color: #444;
}

.track {
    flex: 1;
    display: flex;
    align-items: flex-end;
}

.thumb {
    border: 1px solid #8d939e;
    border-radius: 1px;
    background: linear-gradient(90deg, #f2f4f9, #d5d9e2);
}

.track .thumb {
    width: 15px;
    height: 213px;
    display: flex;
    align-items: center;
    justify-content: center;
}

.track .thumb::before {
    content: "";
    width: 8px;
    height: 7px;
    background: repeating-linear-gradient(#868b93 0 1px, transparent 1px 2px);
}

.page-buttons {
    height: 49px;
    border-top: 2px solid #b9bdc3;
}

.page-buttons button {
    width: 16px;
    height: 16px;
    flex-direction: column;
}

.vscroll .page-buttons .tri.up {
    border-width: 4px;
    border-top: none;
    border-bottom-color: #000;
}

.vscroll .page-buttons .tri.down {
    border-width: 4px;
    border-bottom: none;
    border-top-color: #000;
}

.notes {
    height: 42px;
    display: flex;
    border-top: 4px solid #f3f5f8;
    background: #fff;
    box-shadow: inset 0 1px #8d939c;
}

.notes-text {
    flex: 1;
    padding: 6px 8px 0 0;
    text-align: right;
    color: #000;
    font-size: 15px;
    line-height: 20px;
}

.notes-scroll {
    width: 16px;
    display: flex;
    flex-direction: column;
    background: #dce0e8;
}

.notes-scroll button {
    flex: 1;
}

.notes-scroll .tri.up { border-bottom-color: #8b9598; }
.notes-scroll .tri.down { border-top-color: #8b9598; }

.hscroll {
    height: 16px;
    display: flex;
    background: #dce0e8;
}

.hscroll button {
    width: 17px;
}

.hscroll button:last-child {
    width: 19px;
}

.hscroll .thumb {
    flex: 1;
    display: flex;
    align-items: center;
    justify-content: center;
    background: linear-gradient(#f2f4f9, #d5d9e2);
}

.hscroll .thumb::before {
    content: "";
    width: 7px;
    height: 7px;
    background: repeating-linear-gradient(90deg, #868b93 0 1px, transparent 1px 2px);
}

/* slides pane */
.pane {
    width: 213px;
    border-left: 4px solid #f1f3f5;
    box-shadow: inset 1px 0 #8d939c;
}

.pane-tabs {
    height: 21px;
    display: flex;
    border-top: 1px solid #8d939c;
    font-size: 12px;
}

.pane-close, .pane-tab {
    background: #b5babf;
    border: 1px solid #8d939c;
    border-top: none;
    border-right: none;
}

.pane-close {
    width: 83px;
    padding-left: 6px;
    display: flex;
}

.pane-tab {
    width: 63px;
    color: #5b6066;
}

.pane-tab.active {
    background: linear-gradient(#dfe2e6, #cdd0d5);
    border-bottom: none;
    color: #333;
}

.thumbs {
    list-style: none;
    margin: 0;
    padding: 3px 3px 0 5px;
    display: flex;
    flex-direction: column;
    gap: 3px;
}

.thumbs li {
    height: 142px;
    padding: 3px;
    display: flex;
    gap: 6px;
    border: 1px solid transparent;
    border-radius: 3px;
    font-family: "DejaVu Sans", sans-serif;
    font-size: 11px;
    font-weight: bold;
}

.thumbs li span {
    padding-top: 4px;
}

.thumbs .selected {
    border-color: #f0cb4e;
    background: linear-gradient(#fdf0bd, #fddf7c 50%, #fde389 62%, #fff8d0 75%, #fffdf0);
}

.mini {
    width: 177px;
    background: #fff;
    border: 1px solid #85898e;
    box-shadow: 0 0 4px rgba(60, 60, 60, .5);
}

/* status bar */
.status {
    height: 22px;
    padding-right: 5px;
    display: flex;
    align-items: center;
    border-top: 1px solid #8b9199;
    border-bottom: 1px solid #5b4b5e;
    background: linear-gradient(#e4e7ea, #bfc3c8);
}

.cell {
    height: 20px;
    padding: 0 8px;
    display: flex;
    align-items: center;
    border-right: 1px solid #9a9fa6;
}

.cell + .cell {
    padding-left: 9px;
}

.lang {
    gap: 16px;
}

.views {
    margin-left: auto;
    height: 20px;
    padding-left: 4px;
    display: flex;
    align-items: center;
    border-left: 1px solid #9a9fa6;
}

.views button {
    width: 19px;
    height: 18px;
}

.views .current {
    border: 1px solid #c9962b;
    border-radius: 2px;
    background: #fddd68;
}

.percent {
    width: 30px;
    margin-left: 7px;
}

.round {
    width: 16px;
    height: 16px;
    border: 1px solid #666b72;
    border-radius: 50%;
    background: #f3f4f6;
}

.zoom {
    width: 100px;
    height: 16px;
    margin: 0;
    appearance: none;
    background: linear-gradient(#8c9198, #8c9198) 50px 50% / 1px 7px no-repeat, linear-gradient(#8c9198, #8c9198) 0 50% / 100% 1px no-repeat;
}

.zoom::-webkit-slider-thumb {
    appearance: none;
    width: 9px;
    height: 12px;
    border: 1px solid #666b72;
    border-radius: 1px 1px 5px 5px;
    background: #f3f4f6;
}

.fit {
    margin-left: 8px;
}

/* taskbar */
.taskbar {
    height: 40px;
    display: flex;
    align-items: stretch;
    border-top: 1px solid #f0cfe8;
    background: linear-gradient(90deg, #94778f, #a5849f 4%, #d0a5c8 10%, #cfa3c5 27%, #ecc0dc 36%, #c39dbc 43%, #c79fc2 60%, #cda5c6 75%, #c49bbd 79%, #a17f9c 84%, #94768f);
}

.start {
    width: 52px;
    margin-right: 7px;
}

.task {
    width: 60px;
    margin-right: 2px;
}

.task.open {
    border: 1px solid #5e4a5d;
    border-radius: 3px;
    box-shadow: inset 0 0 0 1px rgba(255, 255, 255, .6);
    background: linear-gradient(135deg, rgba(255, 255, 255, .55), rgba(255, 255, 255, .15));
}

.task.focus {
    background: linear-gradient(#f5e6f1, #e6cddf);
}

.task.ie {
    width: 56px;
    margin-right: 6px;
    box-shadow: inset 0 0 0 1px rgba(255, 255, 255, .6), 3px 0 #d5b3cf, 4px 0 #5e4a5d;
}

.tray {
    margin-left: auto;
    display: flex;
    align-items: center;
    color: #fff;
}

.input-lang {
    margin: 0 16px 6px 0;
    font-size: 12px;
}

.tray .tri.up {
    border-width: 4px;
    border-top: none;
    border-bottom-color: #fff;
    margin-right: 16px;
}

.signal { margin-left: 11px; }
.flag { margin-left: 8px; }
.speaker { margin: 0 18px 0 9px; }

.tray time {
    width: 60px;
    text-align: center;
    line-height: 16px;
    font-size: 11px;
}

.show-desktop {
    width: 14px;
    height: 39px;
    margin-left: 11px;
    border: 1px solid #cdb3ca;
    background: linear-gradient(#a98ba6, #7f627d 50%, #b18fad);
}
```
